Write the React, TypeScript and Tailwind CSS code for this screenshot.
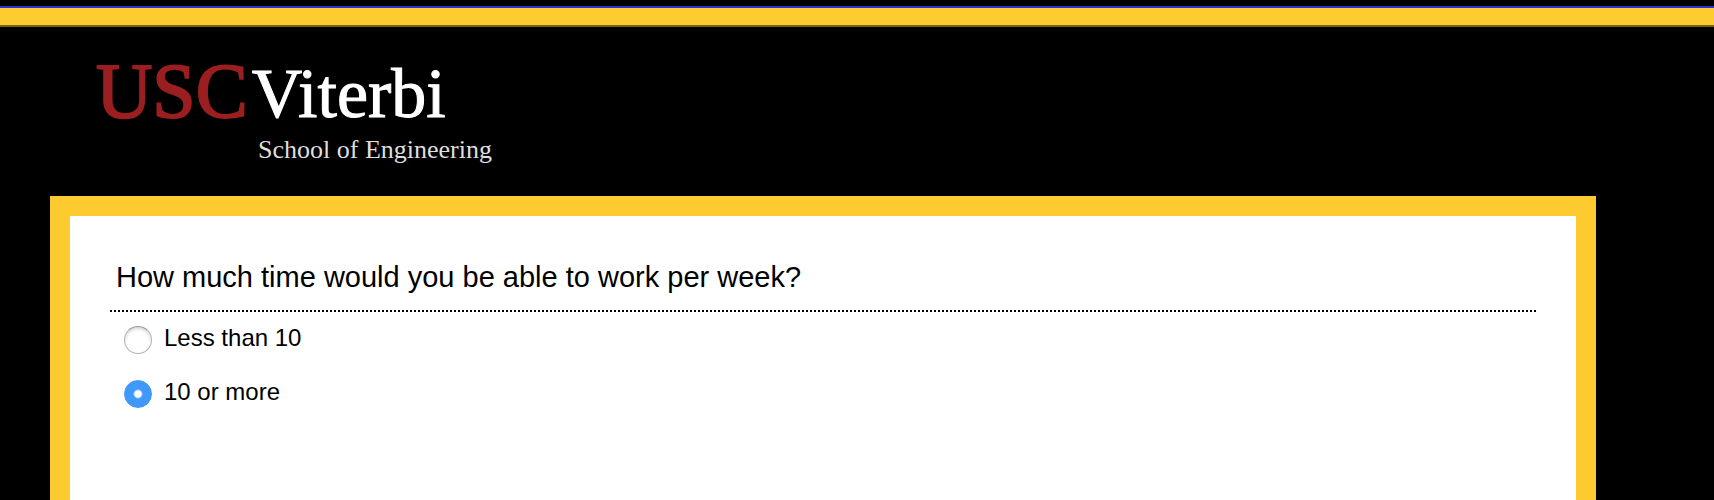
import { useState } from "react";

const OPTIONS = [
  { value: "less", label: "Less than 10" },
  { value: "more", label: "10 or more" },
];

const RADIO =
  "h-7 w-7 shrink-0 cursor-pointer appearance-none rounded-full border border-[#b4b4b4] border-t-[#989898] bg-white shadow-[inset_0_2px_3px_rgba(0,0,0,0.16)] " +
  "checked:border-[#3f99f9] checked:bg-[radial-gradient(circle,#ffffff_0_3px,#3f99f9_5px)] checked:shadow-none";

function Logo() {
  return (
    <h1 className="flex w-fit flex-col font-['Liberation_Serif',serif] text-white">
      <span className="flex items-baseline gap-1 leading-[80px]">
        <span className="text-[78px] text-[#9b1f20] [-webkit-text-stroke:2px_#9b1f20]">USC</span>
        <span className="text-[70px] [-webkit-text-stroke:1px_#ffffff]">Viterbi</span>
      </span>
      <span className="pl-[162px] text-[26px] leading-8 text-[#dedede]">School of Engineering</span>
    </h1>
  );
}

export default function App() {
  const [hours, setHours] = useState("more");

  return (
    <div className="flex min-h-screen flex-col bg-black font-['Liberation_Sans',Arial,sans-serif] text-black">
      <div className="mt-[6px] h-[21px] border-t-2 border-b-2 border-t-[#2a32d6] border-b-[#7d6118] bg-[#ffcc2f]" />
      <header className="h-[169px] pt-6 pl-24">
        <Logo />
      </header>
      <main className="mr-[118px] ml-[50px] flex-1 border-[20px] border-b-0 border-[#fdca2f] bg-white px-10 pt-10">
        <fieldset>
          <legend className="w-full px-[6px] pb-3 text-[29px] leading-[42px]">
            How much time would you be able to work per week?
          </legend>
          <div className="h-[2px] bg-[repeating-linear-gradient(90deg,#000000_0_2px,#ffffff_2px_4px)]" />
          <div className="flex flex-col gap-[26px] pt-[14px] pl-[14px]">
            {OPTIONS.map((option) => (
              <label key={option.value} className="flex w-fit cursor-pointer items-center gap-3">
                <input
                  type="radio"
                  name="hours"
                  value={option.value}
                  checked={hours === option.value}
                  onChange={() => setHours(option.value)}
                  className={RADIO}
                />
                <span className="pb-1 text-[24px] leading-6">{option.label}</span>
              </label>
            ))}
          </div>
        </fieldset>
      </main>
    </div>
  );
}
